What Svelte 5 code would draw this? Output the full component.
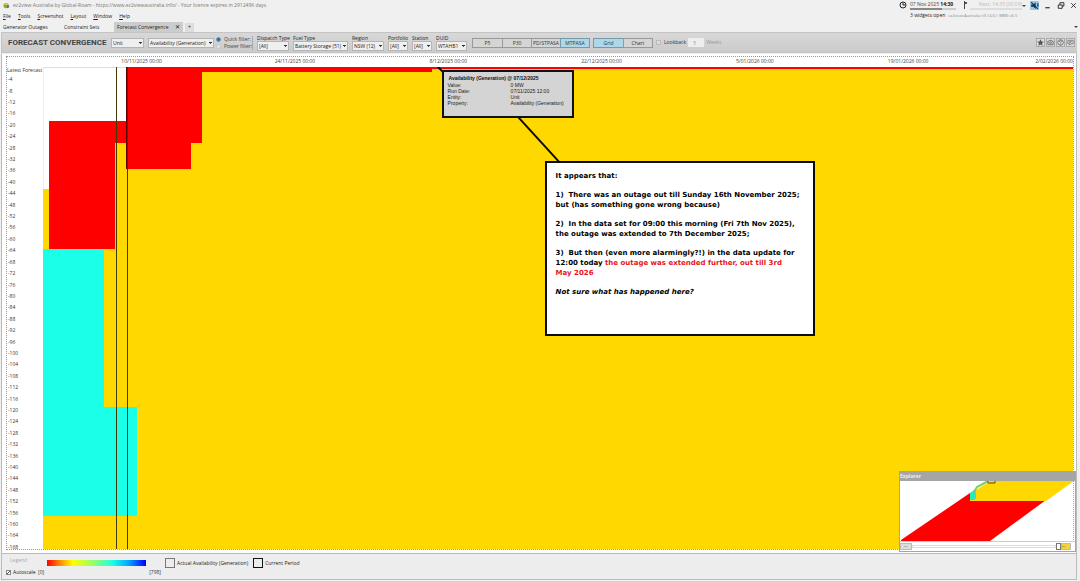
<script>
  const menus = ['File', 'Tools', 'Screenshot', 'Layout', 'Window', 'Help'];
  const filters = [
    { id: 'dispatch', label: 'Dispatch Type', value: '[All]', width: 32 },
    { id: 'fuel', label: 'Fuel Type', value: 'Battery Storage (51)', width: 55 },
    { id: 'region', label: 'Region', value: 'NSW (12)', width: 32 },
    { id: 'portfolio', label: 'Portfolio', value: '[All]', width: 20 },
    { id: 'station', label: 'Station', value: '[All]', width: 20 },
    { id: 'duid', label: 'DUID', value: 'WTAHB1', width: 31 }
  ];
  const horizons = ['P5', 'P30', 'PD/STPASA', 'MTPASA'];
  const dates = [
    '10/11/2025 00:00', '24/11/2025 00:00', '8/12/2025 00:00', '22/12/2025 00:00',
    '5/01/2026 00:00', '19/01/2026 00:00', '2/02/2026 00:00'
  ];
  const steps = Array.from({ length: 42 }, (_, i) => -(i + 1) * 4);
  const details = [
    ['Value:', '0 MW'],
    ['Run Date:', '07/11/2025 12:00'],
    ['Entity:', 'Unit'],
    ['Property:', 'Availability (Generation)']
  ];
  let horizon = $state('MTPASA');
  let view = $state('Grid');
</script>

<div class="app">
  <header>
    <div class="heading">
      <div class="titlebar">
        <svg class="logo" viewBox="0 0 8 8"><circle cx="3.5" cy="4" r="3" fill="#8fa83a" /><path d="M1 3l3-2 2 1-2 2z" fill="#e7c83c" /><path d="M4 4h3v2l-2 1z" fill="#466f9c" /></svg>
        <span>ez2view Australia by Global-Roam - https://www.ez2viewaustralia.info/ - Your licence expires in 2912496 days</span>
      </div>
      <nav>
        {#each menus as menu}<a href="#menu"><u>{menu[0]}</u>{menu.slice(1)}</a>{/each}
      </nav>
    </div>
    <svg class="clock" viewBox="0 0 8 8" fill="none" stroke="#222"><circle cx="4" cy="4" r="3" /><path d="M4 2v2h2" /></svg>
    <div class="status">
      <div class="times">
        <div class="now">
          <div>07 Nov 2025 <b>14:30</b></div>
          <div class="bar"><i></i></div>
        </div>
        <span class="flag"></span>
        <div class="next">
          <div>Next: 14:35 (00:09)</div>
          <div class="bar"></div>
        </div>
      </div>
      <div class="info"><span class="open">3 widgets open</span><span class="version">ez2view Australia v9.14.0.1 MMS v6.5</span></div>
    </div>
    <div class="window">
      <span class="arrow"></span>
      <button class="mute" aria-label="Mute"><svg viewBox="0 0 8 8"><path d="M1 3h2l2-2v6L3 5H1z" fill="#12344f" /><path d="M1 1l6 6M7 2v3" stroke="#12344f" /></svg></button>
      <button aria-label="Minimise"><svg viewBox="0 0 8 8"><path d="M2 6h4" stroke="#222" /></svg></button>
      <button aria-label="Restore"><svg viewBox="0 0 8 8" fill="none" stroke="#222" stroke-width=".8"><path d="M2 3.500h3.500v3H2zM3.500 3.500v-2H7v3H5.500" /></svg></button>
      <button aria-label="Close"><svg viewBox="0 0 8 8"><path d="M2 2l4 4M6 2L2 6" stroke="#222" stroke-width=".8" /></svg></button>
    </div>
  </header>

  <div class="tabs">
    <button>Generator Outages</button>
    <button>Constraint Sets</button>
    <button class="current">Forecast Convergence <b>✕</b></button>
    <button class="add" aria-label="Add tab">+</button>
    <span class="arrow"></span>
  </div>

  <section class="toolbar">
    <h1>FORECAST CONVERGENCE</h1>
    <select class="unit" aria-label="Entity"><option>Unit</option></select>
    <select class="property" aria-label="Property"><option>Availability (Generation)</option></select>
    <div class="modes">
      <label><input type="radio" name="mode" checked />Quick filter:</label>
      <label><input type="radio" name="mode" />Power filter:</label>
    </div>
    <div class="filters">
      {#each filters as f}
        <div style="width: {f.width}px">
          <label for={f.id}>{f.label}</label>
          <select id={f.id}><option>{f.value}</option></select>
        </div>
      {/each}
    </div>
    <div class="segment">
      {#each horizons as h}<button class:on={horizon === h} onclick={() => (horizon = h)}>{h}</button>{/each}
    </div>
    <div class="segment">
      {#each ['Grid', 'Chart'] as v}<button class:on={view === v} onclick={() => (view = v)}>{v}</button>{/each}
    </div>
    <label class="lookback"><input type="checkbox" />Lookback</label>
    <label class="weeks"><input type="text" value="5" /><span>Weeks</span></label>
    <div class="tools">
      <button aria-label="Favourite"><svg viewBox="0 0 8 8"><path d="M4 .3l1.200 2.500 2.600.3-2 1.800.6 2.700L4 6.300 1.600 7.600l.6-2.700-2-1.800 2.600-.3z" fill="#555" /></svg></button>
      <button aria-label="Screenshot"><svg viewBox="0 0 8 8" fill="none" stroke="#666"><path d="M1 2.500h1.500l.5-1h2l.5 1H7v4H1z" /><circle cx="4" cy="4.300" r="1" /></svg></button>
      <button aria-label="Help"><svg viewBox="0 0 8 8" fill="none" stroke="#666"><circle cx="4" cy="4" r="3.200" /><path d="M2.800 3.300c0-2 2.800-1.500 2.300 0L4 4.300v.5M4 5.500v1" /></svg></button>
      <button aria-label="Comments"><svg viewBox="0 0 8 8" fill="none" stroke="#666"><path d="M1 1.500h6v4H4.500L3 7V5.500H1zM2.500 3h3M2.500 4.200h2" stroke-width=".8" /></svg></button>
    </div>
  </section>

  <main>
    <div class="frame">
      <div class="dates">{#each dates as d}<span>{d}</span>{/each}</div>
      <div class="body">
        <div class="steps">
          <span class="latest">Latest Forecast</span>
          {#each steps as s}<span>{s}</span>{/each}
        </div>
        <div class="plot">
          <svg viewBox="0 0 1030 483" preserveAspectRatio="none" shape-rendering="crispEdges">
            <rect width="1030" height="483" fill="#ffd800" />
            <path d="M0 0H84V54H6V122H0z" fill="#fff" />
            <path d="M83 0H1030V2H389V5H159V76H148V102H83V76H72V182H6V54H83z" fill="#f00" />
            <path d="M0 182H61V341H94V450H0z" fill="#1affe8" />
            <path d="M0 0V122M0 .5H83" stroke="#ddd" />
            <path d="M73.500 0V483M84.500 0V483" stroke="#443900" />
            <path d="M83.500 0V102" stroke="#500" />
          </svg>
          <svg class="links" viewBox="0 0 1030 483" preserveAspectRatio="none">
            <path d="M395 0L402 7M475 50L517 96" stroke="#0b0b0b" stroke-width="2" />
          </svg>
          <div class="tip">
            <b>Availability (Generation) @ 07/12/2025</b>
            <dl>{#each details as [k, v]}<dt>{k}</dt><dd>{v}</dd>{/each}</dl>
          </div>
          <div class="note">
            <p>It appears that:</p>
            <p>1)&nbsp; There was an outage out till Sunday 16th November 2025;<br />but (has something gone wrong because)</p>
            <p>2)&nbsp; In the data set for 09:00 this morning (Fri 7th Nov 2025),<br />the outage was extended to 7th December 2025;</p>
            <p>3)&nbsp; But then (even more alarmingly?!) in the data update for<br />12:00 today <em>the outage was extended further, out till 3rd<br />May 2026</em></p>
            <p><i>Not sure what has happened here?</i></p>
          </div>
        </div>
      </div>
    </div>
    <aside>
      <h2>Explorer</h2>
      <svg viewBox="0 0 175 60" preserveAspectRatio="none">
        <path d="M1 59L70 12V19H146L90 60H1z" fill="#f00" />
        <path d="M70 19V13L90 0H174L146 20H70z" fill="#ffd800" />
        <path d="M70 12l5-4 1 5v3l-1 3h-5z" fill="#2ee6c4" />
        <path d="M74 11l3-5 11-6" fill="none" stroke="#7bcf6b" stroke-width="2" />
        <path d="M88 0v2h7V0" fill="none" stroke="#554a20" />
        <path d="M173.500 0V60" stroke="#aaa" stroke-dasharray="1 1" />
      </svg>
      <div class="scroll"><i class="grip">...</i><i class="track"></i><i class="box"></i><i class="end">...</i></div>
    </aside>
  </main>

  <footer>
    <div class="scale">
      <span class="caption">Legend</span>
      <div class="ramp"></div>
      <label><input type="checkbox" checked />Autoscale</label>
      <div class="range"><span>[0]</span><span>[798]</span></div>
    </div>
    <span class="key"><i></i>Actual Availability (Generation)</span>
    <span class="key dark"><i></i>Current Period</span>
  </footer>
</div>

<style>
  :global(body) { margin: 0; background: #f0f0f0; }
  .app { min-height: 100vh; display: flex; flex-direction: column; font: 5px/7px "Open Sans", "Noto Sans", sans-serif; color: #333; white-space: nowrap; overflow: hidden; position: relative; }
  .app, .app * { box-sizing: border-box; }
  button, select, input { font: inherit; color: inherit; margin: 0; padding: 0; border: 0; background: none; border-radius: 0; min-width: 0; }
  svg { display: block; }
  header { display: flex; align-items: flex-start; height: 22px; padding: 1px 2px 0 3px; flex: none; }
  .heading { flex: 1; }
  .titlebar { display: flex; align-items: center; gap: 3px; height: 9px; color: #777; }
  .logo { width: 7px; height: 7px; }
  nav { display: flex; gap: 7px; padding-top: 3px; }
  nav a { color: #222; text-decoration: none; }
  .clock { width: 8px; height: 8px; margin-right: 3px; }
  .times { display: flex; }
  .now { width: 46px; color: #444; }
  .now b { color: #111; }
  .bar { height: 2px; background: #ccc; }
  .bar i { display: block; width: 32px; height: 2px; background: #888; }
  .flag { width: 3px; height: 8px; margin: 0 3px 0 8px; border-left: 1px solid #444; background: linear-gradient(#555, #555) 0 1px / 2px 2px no-repeat; }
  .next { color: #bbb; text-align: right; width: 52px; }
  .next .bar { background: #ddd; }
  .info { display: flex; gap: 3px; padding-top: 2px; color: #888; }
  .open { color: #222; }
  .version { font-size: 4px; }
  .window { display: flex; align-items: center; gap: 4px; }
  .window button, .window svg { width: 9px; height: 9px; }
  .window .mute { background: #9cc8e8; }
  .arrow { width: 0; height: 0; border: 2px solid transparent; border-top: 2px solid #444; border-bottom: 0; }
  .tabs { display: flex; align-items: center; height: 10px; flex: none; }
  .tabs button { height: 10px; padding-left: 3px; line-height: 10px; text-align: left; color: #222; flex: none; width: 61px; }
  .tabs .current { width: 69px; background: #ccc; display: flex; justify-content: space-between; padding-right: 3px; margin-left: -8px; }
  .tabs .current b { font: 6px/10px "DejaVu Sans", sans-serif; }
  .tabs .add { width: 9px; margin-left: 2px; padding: 0; height: 9px; line-height: 9px; text-align: center; background: #ddd; }
  .tabs .arrow { margin: 0 2px 0 auto; }
  .toolbar { display: flex; align-items: center; height: 21px; flex: none; margin: 0 3px 0 1px; padding: 0 2px 0 6px; background: linear-gradient(#d8d8d8, #cbcbcb); border: 1px solid #c4c4c4; border-width: 1px 0 1px 1px; }
  h1 { margin: 0; font: bold 8px/10px Roboto, "Open Sans", sans-serif; color: #444; width: 103px; flex: none; }
  select { appearance: none; display: block; height: 10px; padding: 0 5px 0 1px; border: 1px solid #b5b5b5; color: #222; background: linear-gradient(#333, #333) right 1px top 3px / 3px 1px no-repeat, linear-gradient(#555, #555) right 2px top 4px / 1px 1px no-repeat, #efefef; line-height: 8px; }
  .unit { width: 33px; margin-right: 4px; }
  .property { width: 66px; margin-right: 2px; }
  .modes { width: 37px; border-right: 1px solid #aaa; margin-right: 4px; flex: none; color: #444; }
  .modes label { display: flex; align-items: center; gap: 3px; height: 7px; }
  input[type="radio"], input[type="checkbox"] { appearance: none; width: 5px; height: 5px; border: 1px solid #bbb; background: #ddd; flex: none; }
  input[type="radio"] { border-radius: 50%; background: #e6e6e6; border-color: #c5c5c5; }
  input[type="radio"]:checked { background: #356b98; border-color: #7798b5; }
  .filters { display: flex; gap: 4px; margin-right: 5px; }
  .filters label { display: block; height: 6px; line-height: 6px; color: #222; }
  .filters select { width: 100%; }
  .segment { display: flex; margin-right: 4px; }
  .segment button { width: 30px; height: 10px; line-height: 8px; border: 1px solid #999; background: #d5d5d5; margin-right: -1px; overflow: hidden; display: flex; justify-content: center; }
  .segment button:first-child { width: 31px; }
  .segment button.on { background: #add8ea; border-color: #7799a8; }
  .lookback, .weeks { display: flex; align-items: center; gap: 3px; margin-right: 2px; }
  .weeks { color: #999; gap: 2px; }
  .weeks input { width: 16px; height: 9px; background: #eee; padding-left: 5px; }
  .tools { display: flex; gap: 1px; margin-left: auto; }
  .tools button { width: 9px; height: 9px; background: #ddd; border: 1px solid #aaa; }
  .tools svg { width: 7px; height: 7px; }
  main { position: relative; flex: 1; display: flex; background: #fff; margin: 0 3px 0 1px; padding: 2px 2px 3px 4px; border: 1px solid #bbb; border-top-color: #eee; }
  .frame { flex: 1; display: flex; flex-direction: column; border: 1px dotted #999; }
  .dates { height: 10px; display: grid; grid-template-columns: repeat(6, 153fr) 88fr; padding-left: 58px; line-height: 9px; text-align: center; color: #444; }
  .dates span:last-child { text-align: right; }
  .body { flex: 1; display: flex; }
  .steps { width: 36px; display: flex; flex-direction: column; color: #333; margin-bottom: -4px; }
  .steps span { flex: 1 1 0; min-height: 0; display: flex; align-items: center; padding-left: 1px; line-height: 5px; }
  .steps .latest { flex: none; height: 7px; padding: 0; }
  .plot { flex: 1; position: relative; }
  .plot svg { position: absolute; inset: 0; width: 100%; height: 100%; }
  .tip { position: absolute; left: 38.700%; top: 3px; width: 132px; height: 48px; border: 2px solid #111; background: #d4d4d4; padding: 3px 4px; color: #222; font: 5px/6px "Liberation Sans", Arial, sans-serif; }
  .tip b { color: #111; display: block; padding-left: 1px; line-height: 7px; }
  dl { margin: 0; display: grid; grid-template-columns: 63px 1fr; }
  dd { margin: 0; }
  .note { position: absolute; left: 48.700%; top: 94px; width: 270px; height: 175px; border: 2px solid #0b0b0b; background: #fff; padding: 8px 9px; color: #000; font: bold 7px/10px "DejaVu Sans", Verdana, sans-serif; }
  .note p { margin: 0 0 9px; }
  .note em { font-style: normal; color: #e8141c; }
  aside { position: absolute; right: 0; bottom: 1px; width: 177px; background: #fff; border: 1px solid #a5a5a5; border-top: 0; }
  h2 { margin: 0; background: #a5a5a5; color: #eee; font-size: 5px; line-height: 10px; height: 10px; }
  aside svg { width: 100%; height: 60px; }
  .scroll { display: flex; align-items: center; height: 10px; border-top: 1px solid #ccc; }
  .scroll i { height: 7px; }
  .grip { width: 12px; background: #ddd; border: 1px solid #bbb; line-height: 3px; text-align: center; }
  .scroll .track { flex: 1; height: 3px; border: 1px solid #ddd; }
  .box { width: 5px; border: 1px solid #777; }
  .end { width: 10px; margin-right: 4px; background: #f3d439; border: 1px solid #bbb; line-height: 3px; }
  footer { display: flex; align-items: flex-start; flex: none; height: 26px; margin: 0 3px 1px 1px; border: 1px solid #bbb; border-top: 0; background: #ededed; padding: 3px 4px; }
  .scale { display: grid; grid-template: 9px 10px / 41px 99px; row-gap: 1px; width: 159px; flex: none; }
  .caption { color: #aaa; padding-left: 4px; }
  .ramp { align-self: end; height: 6px; background: linear-gradient(90deg, #f00, #ff8000 12%, #ff0 26%, #9f6 46%, #20ffe0 66%, #0af 82%, #00f); }
  .scale label { display: flex; align-items: center; gap: 2px; color: #222; }
  .scale input:checked { background: linear-gradient(135deg, transparent 40%, #555 40% 65%, transparent 65%), #fff; border-color: #888; }
  .range { display: flex; justify-content: space-between; align-items: center; margin: 0 -15px 0 -9px; }
  .key { display: flex; align-items: center; gap: 2px; margin-right: 5px; height: 12px; color: #222; }
  .key i { width: 10px; height: 10px; border: 1px solid #777; }
  .key.dark i { border-color: #111; }
</style>
